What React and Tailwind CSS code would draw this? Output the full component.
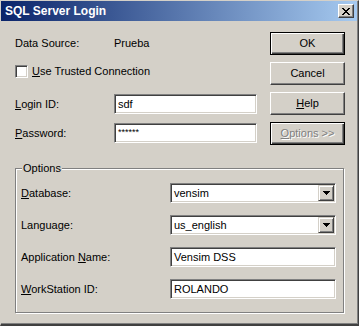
const FONT = "font-['Liberation_Sans',Arial,sans-serif]";

// sunken edit box, Windows 2000 style
function Edit({ children, className = "" }) {
  return (
    <div
      className={`h-[20px] bg-white border border-t-[#808080] border-l-[#808080] border-b-white border-r-white shadow-[inset_1px_1px_0_#404040,inset_-1px_-1px_0_#D4D0C8] flex items-center pl-[3px] text-black ${className}`}
    >
      {children}
    </div>
  );
}

function Combo({ value }) {
  return (
    <div className="w-[166px] h-[20px] bg-white border border-t-[#808080] border-l-[#808080] border-b-white border-r-white shadow-[inset_1px_1px_0_#404040,inset_-1px_-1px_0_#D4D0C8] flex items-center p-[1px]">
      <span className="flex-1 pl-[2px] text-black">{value}</span>
      <div className="w-[16px] h-[16px] bg-[#D4D0C8] border border-t-[#D4D0C8] border-l-[#D4D0C8] border-b-[#404040] border-r-[#404040] shadow-[inset_1px_1px_0_#fff,inset_-1px_-1px_0_#808080] flex items-center justify-center">
        <svg width="7" height="4" viewBox="0 0 7 4" shapeRendering="crispEdges">
          <path d="M0 0h7v1H0zM1 1h5v1H1zM2 2h3v1H2zM3 3h1v1H3z" fill="#000" />
        </svg>
      </div>
    </div>
  );
}

function Button({ children, isDefault, disabled }) {
  const frame = isDefault
    ? "border border-black shadow-[inset_1px_1px_0_#fff,inset_-1px_-1px_0_#404040,inset_-2px_-2px_0_#808080]"
    : "border border-t-white border-l-white border-b-[#404040] border-r-[#404040] shadow-[inset_-1px_-1px_0_#808080]";
  return (
    <div
      className={`w-[75px] h-[23px] bg-[#D4D0C8] flex items-center justify-center ${frame} ${
        disabled ? "text-[#808080] [text-shadow:1px_1px_0_#fff]" : "text-black"
      }`}
    >
      {children}
    </div>
  );
}

const U = ({ children }) => <span className="underline underline-offset-[1px]">{children}</span>;

export default function App() {
  return (
    <div
      className={`${FONT} text-[11px] w-[359px] h-[326px] bg-[#D4D0C8] border-l border-t border-l-[#D4D0C8] border-t-[#D4D0C8] border-r border-b-2 border-r-[#404040] border-b-[#404040] shadow-[inset_-1px_-1px_0_#808080] flex flex-col`}
    >
      {/* title bar */}
      <div className="h-[20px] mr-[1px] bg-[linear-gradient(to_right,#0A246A,#A6CAF0)] flex items-center justify-between pl-[4px] pr-[3px]">
        <span className="text-white font-bold text-[12px]">SQL Server Login</span>
        <div className="w-[16px] h-[14px] bg-[#D4D0C8] border border-t-white border-l-white border-b-[#404040] border-r-[#404040] shadow-[inset_-1px_-1px_0_#808080] flex items-center justify-center">
          <svg width="8" height="7" viewBox="0 0 8 7" shapeRendering="crispEdges">
            <path
              d="M0 0h2v1H0zM6 0h2v1H6zM1 1h2v1H1zM5 1h2v1H5zM2 2h4v1H2zM3 3h2v1H3zM2 4h4v1H2zM1 5h2v1H1zM5 5h2v1H5zM0 6h2v1H0zM6 6h2v1H6z"
              fill="#000"
            />
          </svg>
        </div>
      </div>

      {/* top part */}
      <div className="flex pt-[11px] pl-[14px]">
        <div className="w-[242px] flex flex-col text-black">
          <div className="h-[23px] flex items-center">
            <span className="w-[99px]">Data Source:</span>
            <span>Prueba</span>
          </div>
          <div className="h-[21px] mt-[6px] flex items-center">
            <div className="w-[13px] h-[13px] bg-white border border-t-[#808080] border-l-[#808080] border-b-white border-r-white shadow-[inset_1px_1px_0_#404040,inset_-1px_-1px_0_#D4D0C8]" />
            <span className="ml-[4px]">
              <U>U</U>se Trusted Connection
            </span>
          </div>
          <div className="mt-[12px] flex items-center">
            <span className="w-[99px]">
              <U>L</U>ogin ID:
            </span>
            <Edit className="w-[143px]">sdf</Edit>
          </div>
          <div className="mt-[9px] flex items-center">
            <span className="w-[99px]">
              <U>P</U>assword:
            </span>
            <Edit className="w-[143px] items-start pt-[2px] text-[9px]">******</Edit>
          </div>
        </div>

        <div className="ml-[13px] flex flex-col gap-[7px]">
          <Button isDefault>OK</Button>
          <Button>Cancel</Button>
          <Button>
            <span>
              <U>H</U>elp
            </span>
          </Button>
          <Button isDefault disabled>
            <span>
              <U>O</U>ptions &gt;&gt;
            </span>
          </Button>
        </div>
      </div>

      {/* options group */}
      <div className="relative ml-[14px] mt-[23px] w-[329px] h-[145px] border border-[#808080] shadow-[1px_1px_0_#fff,inset_1px_1px_0_#fff] pt-[14px] pl-[5px] text-black">
        <span className="absolute -top-[7px] left-[6px] px-[1px] bg-[#D4D0C8] leading-[13px]">Options</span>
        <div className="flex flex-col gap-[12px]">
          <div className="flex items-center">
            <span className="w-[149px]">
              <U>D</U>atabase:
            </span>
            <Combo value="vensim" />
          </div>
          <div className="flex items-center">
            <span className="w-[149px]">
              Lan<U>g</U>uage:
            </span>
            <Combo value="us_english" />
          </div>
          <div className="flex items-center">
            <span className="w-[149px]">
              Application <U>N</U>ame:
            </span>
            <Edit className="w-[166px]">Vensim DSS</Edit>
          </div>
          <div className="flex items-center">
            <span className="w-[149px]">
              <U>W</U>orkStation ID:
            </span>
            <Edit className="w-[166px]">ROLANDO</Edit>
          </div>
        </div>
      </div>
    </div>
  );
}
